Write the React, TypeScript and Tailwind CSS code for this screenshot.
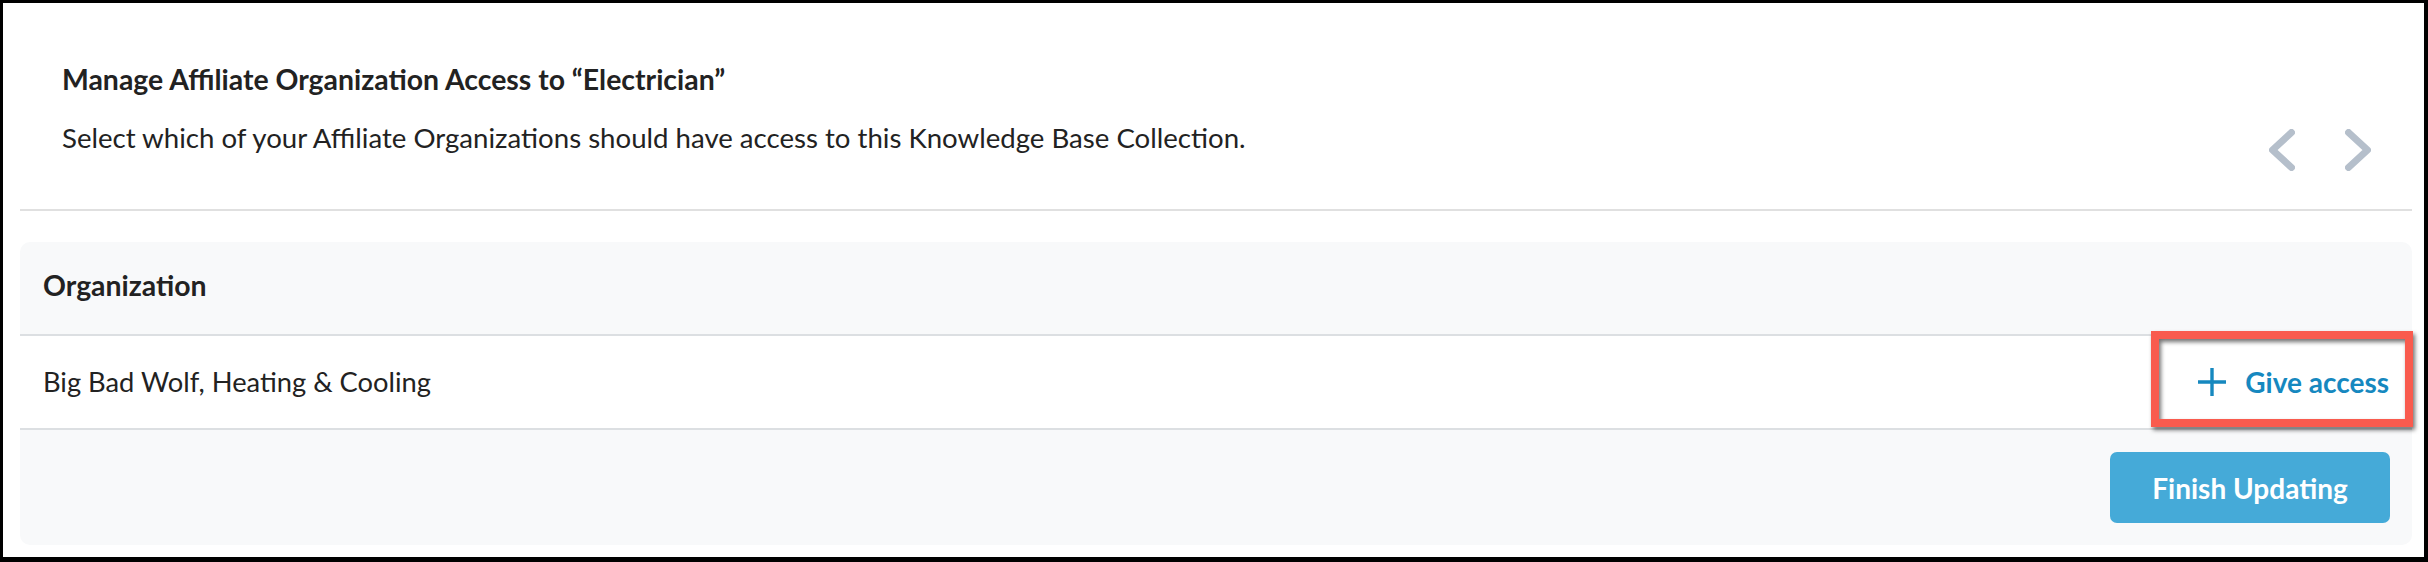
import React from "react";

function Chevron({ dir }: { dir: "left" | "right" }) {
  return (
    <svg width="26" height="42" viewBox="0 0 26 42" fill="none">
      <polyline
        points={dir === "left" ? "22.5,3.5 3.5,21 22.5,38.5" : "3.5,3.5 22.5,21 3.5,38.5"}
        stroke="#b5bfcb"
        strokeWidth="7"
        strokeLinecap="round"
        strokeLinejoin="round"
      />
    </svg>
  );
}

export default function App() {
  return (
    <div
      className="w-[2428px] h-[562px] border-l-[3px] border-t-[3px] border-r-[4px] border-b-[5px] border-black bg-white text-[#222222] flex flex-col"
      style={{ fontFamily: "Lato, 'Open Sans', sans-serif" }}
    >
      <div className="ml-[17px] mr-[12px] h-[208px] pt-[59px] pl-[42px] pr-[41px] flex items-start justify-between border-b-2 border-[#e0e0e0]">
        <div className="flex flex-col">
          <h1 className="text-[28.4px] font-bold leading-[34px]">
            Manage Affiliate Organization Access to “Electrician”
          </h1>
          <p className="text-[27.6px] leading-[34px] mt-[25px]">
            Select which of your Affiliate Organizations should have access to this Knowledge Base Collection.
          </p>
        </div>
        <div className="flex items-center gap-[50px] mt-[67px]">
          <Chevron dir="left" />
          <Chevron dir="right" />
        </div>
      </div>

      <div className="ml-[17px] mr-[12px] mt-[31px] rounded-[10px] bg-[#f8f9fa] flex flex-col">
        <div className="h-[94px] pt-[26px] px-[23px] border-b-2 border-[#dcdfe2]">
          <span className="text-[28.4px] font-bold leading-[34px]">Organization</span>
        </div>
        <div className="relative h-[94px] bg-white flex items-center justify-between px-[23px] border-b-2 border-[#dcdfe2]">
          <span className="text-[27.3px] leading-[34px]">Big Bad Wolf, Heating &amp; Cooling</span>
          <button className="flex items-center gap-[19px] text-[#1688bf] text-[28px] leading-[34px] font-bold">
            <svg width="28" height="28" viewBox="0 0 28 28">
              <path d="M14 0v28M0 14h28" stroke="#1688bf" strokeWidth="3.4" />
            </svg>
            Give access
          </button>
          <div className="absolute right-[-1px] top-[-5px] w-[262px] h-[96px] border-[8px] border-[#f95b4e] drop-shadow-[2px_3px_2px_rgba(0,0,0,0.55)]" />
        </div>
        <div className="h-[115px] flex items-start justify-end pt-[22px] pr-[22px]">
          <button className="w-[280px] h-[71px] rounded-[7px] bg-[#45aad8] text-white text-[28px] font-bold">
            Finish Updating
          </button>
        </div>
      </div>
    </div>
  );
}
